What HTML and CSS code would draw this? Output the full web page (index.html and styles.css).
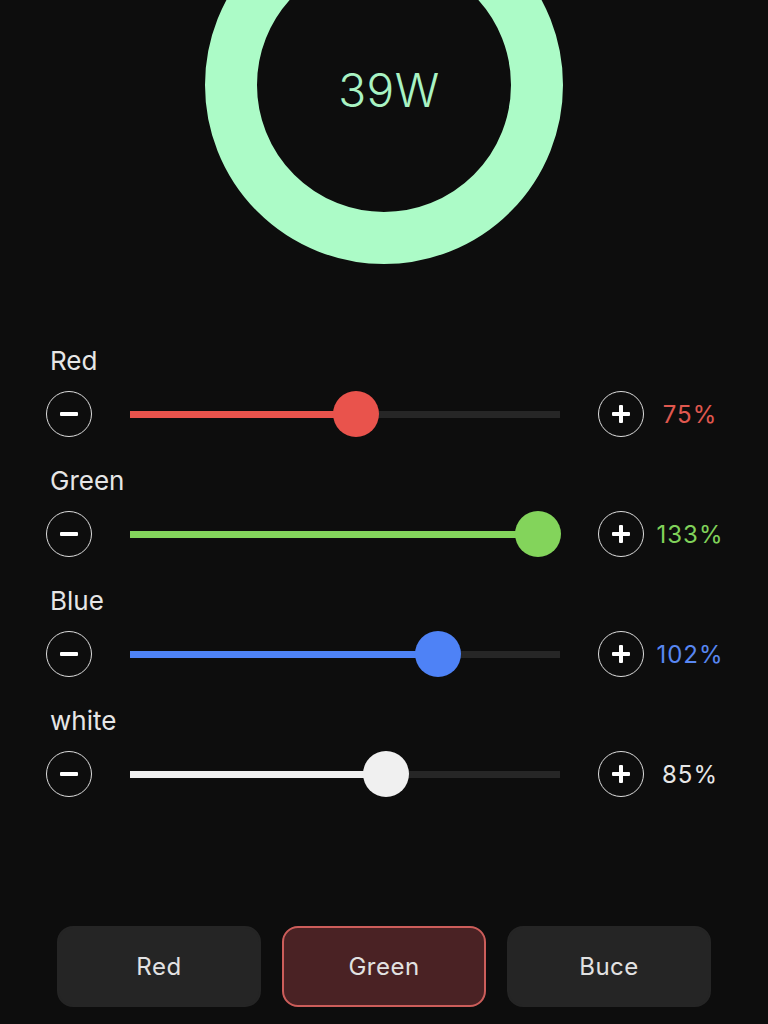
FILE: index.html
```html
<!DOCTYPE html>
<html lang="en">
<head>
<meta charset="utf-8">
<title>Light control</title>
<link rel="stylesheet" href="styles.css">
</head>
<body>
<main class="app">
  <section class="gauge">
    <div class="ring"><span class="watts">39W</span></div>
  </section>

  <section class="channels">
    <div class="channel red">
      <div class="label">Red</div>
      <div class="row">
        <button class="round" aria-label="decrease"><span class="minus"></span></button>
        <div class="track"><div class="fill" style="width:52.6%"></div><div class="thumb" style="left:52.6%"></div></div>
        <button class="round" aria-label="increase"><span class="plus"></span></button>
        <span class="pct">75%</span>
      </div>
    </div>
    <div class="channel green">
      <div class="label">Green</div>
      <div class="row">
        <button class="round" aria-label="decrease"><span class="minus"></span></button>
        <div class="track"><div class="fill" style="width:94.9%"></div><div class="thumb" style="left:94.9%"></div></div>
        <button class="round" aria-label="increase"><span class="plus"></span></button>
        <span class="pct">133%</span>
      </div>
    </div>
    <div class="channel blue">
      <div class="label">Blue</div>
      <div class="row">
        <button class="round" aria-label="decrease"><span class="minus"></span></button>
        <div class="track"><div class="fill" style="width:71.6%"></div><div class="thumb" style="left:71.6%"></div></div>
        <button class="round" aria-label="increase"><span class="plus"></span></button>
        <span class="pct">102%</span>
      </div>
    </div>
    <div class="channel white">
      <div class="label">white</div>
      <div class="row">
        <button class="round" aria-label="decrease"><span class="minus"></span></button>
        <div class="track"><div class="fill" style="width:59.5%"></div><div class="thumb" style="left:59.5%"></div></div>
        <button class="round" aria-label="increase"><span class="plus"></span></button>
        <span class="pct">85%</span>
      </div>
    </div>
  </section>

  <nav class="presets">
    <button class="preset">Red</button>
    <button class="preset active">Green</button>
    <button class="preset">Buce</button>
  </nav>
</main>
</body>
</html>
```

FILE: styles.css
```css
* { box-sizing: border-box; }
html, body {
  margin: 0;
  padding: 0;
  background: #0d0d0d;
  height: 1024px;
  overflow: hidden;
}
body {
  font-family: Inter, "Liberation Sans", sans-serif;
  color: #e4e4e4;
}
.app {
  display: flex;
  flex-direction: column;
  width: 768px;
}
.gauge {
  display: flex;
  justify-content: center;
  margin-top: -94px;
}
.ring {
  width: 358px;
  height: 358px;
  border-radius: 50%;
  border: 52px solid #acfbc7;
  display: flex;
  justify-content: center;
  align-items: center;
}
.watts {
  font-size: 46px;
  font-weight: 300;
  letter-spacing: 0.5px;
  color: #a9f3c3;
  line-height: 1;
  margin-top: 10px;
  padding-left: 10px;
}
.channels {
  display: flex;
  flex-direction: column;
  gap: 28px;
  margin-top: 81px;
  padding-left: 46px;
}
.label {
  font-size: 26px;
  line-height: 32px;
  padding-left: 4px;
  color: #e6e6e6;
  margin-bottom: 14px;
}
.row {
  display: flex;
  align-items: center;
  height: 46px;
}
.round {
  width: 46px;
  height: 46px;
  border-radius: 50%;
  border: 1.5px solid #dcdcdc;
  background: transparent;
  padding: 0;
  display: flex;
  justify-content: center;
  align-items: center;
  position: relative;
  flex: none;
}
.minus, .plus {
  display: block;
  position: relative;
  width: 18px;
  height: 4px;
  background: #fff;
  border-radius: 1px;
}
.plus::after {
  content: "";
  position: absolute;
  left: 7px;
  top: -7px;
  width: 4px;
  height: 18px;
  background: #fff;
  border-radius: 1px;
}
.track {
  position: relative;
  width: 430px;
  height: 7px;
  background: #262626;
  margin: 0 38px;
  flex: none;
}
.fill {
  height: 100%;
}
.thumb {
  position: absolute;
  top: 50%;
  width: 46px;
  height: 46px;
  border-radius: 50%;
  transform: translate(-50%, -50%);
}
.pct {
  width: 92px;
  text-align: center;
  font-size: 24px;
  letter-spacing: 1px;
}
.red .fill, .red .thumb { background: #e9534c; }
.red .pct { color: #e0584f; }
.green .fill, .green .thumb { background: #83d45b; }
.green .pct { color: #80d25a; }
.blue .fill, .blue .thumb { background: #4e82f6; }
.blue .pct { color: #5887f2; }
.white .fill, .white .thumb { background: #f0f0f0; }
.white .pct { color: #e6e6e6; }

.presets {
  display: flex;
  justify-content: center;
  gap: 21px;
  margin-top: 129px;
}
.preset {
  width: 204px;
  height: 81px;
  border-radius: 16px;
  border: 2px solid #252525;
  background: #252525;
  color: #e2e2e2;
  font-family: Inter, "Liberation Sans", sans-serif;
  font-size: 24px;
  letter-spacing: 0.5px;
}
.preset.active {
  background: #4a2224;
  border-color: #cc5d5a;
}
```
